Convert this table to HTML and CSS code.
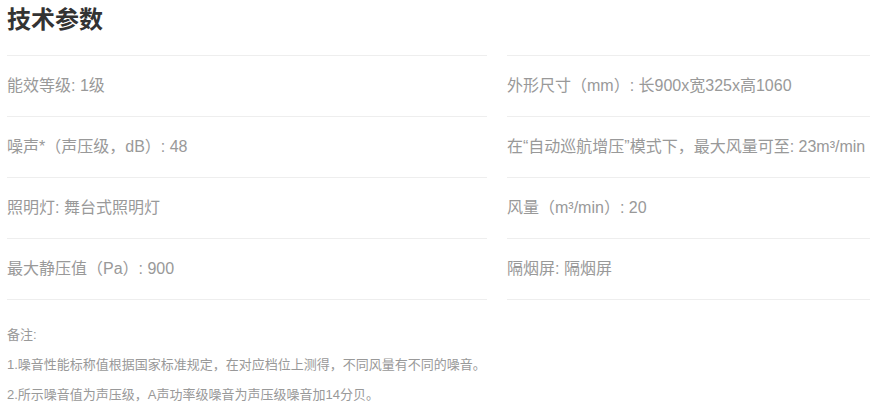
FILE: index.html
```html
<!DOCTYPE html>
<html lang="zh-CN">
<head>
<meta charset="utf-8">
<title>技术参数</title>
<link rel="stylesheet" href="styles.css">
</head>
<body>
<div class="page">
  <h2 class="title">技术参数</h2>
  <div class="specs">
    <div class="col">
      <div class="row">能效等级: 1级</div>
      <div class="row">噪声*（声压级，dB）: 48</div>
      <div class="row">照明灯: 舞台式照明灯</div>
      <div class="row">最大静压值（Pa）: 900</div>
    </div>
    <div class="col">
      <div class="row">外形尺寸（mm）: 长900x宽325x高1060</div>
      <div class="row">在“自动巡航增压”模式下，最大风量可至: 23m³/min</div>
      <div class="row">风量（m³/min）: 20</div>
      <div class="row">隔烟屏: 隔烟屏</div>
    </div>
  </div>
  <div class="notes">
    <p>备注:</p>
    <p>1.噪音性能标称值根据国家标准规定，在对应档位上测得，不同风量有不同的噪音。</p>
    <p>2.所示噪音值为声压级，A声功率级噪音为声压级噪音加14分贝。</p>
  </div>
</div>
</body>
</html>
```
FILE: styles.css
```css
html, body {
  margin: 0;
  padding: 0;
  overflow: hidden;
  background: #fff;
}
.page {
  padding-left: 7px;
  font-family: "Liberation Sans", "Noto Sans CJK SC", sans-serif;
}
.title {
  margin: 0;
  height: 55px;
  line-height: 40px;
  font-size: 24px;
  font-weight: bold;
  color: #333;
}
.specs {
  display: grid;
  grid-template-columns: 480px minmax(0, 1fr);
  column-gap: 20px;
}
.col {
  min-width: 0;
}
.row {
  height: 60px;
  line-height: 60px;
  border-top: 1px solid #eee;
  font-size: 16px;
  color: #999;
  white-space: nowrap;
  overflow: hidden;
}
.row:last-child {
  border-bottom: 1px solid #eee;
}
.notes {
  padding-top: 20px;
}
.notes p {
  margin: 0;
  line-height: 30px;
  font-size: 13px;
  color: #999;
}
```
